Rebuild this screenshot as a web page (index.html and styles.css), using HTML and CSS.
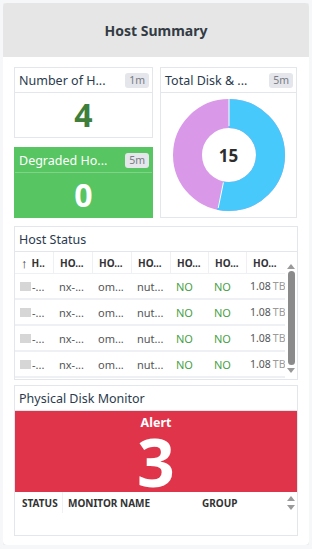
FILE: index.html
```html
<!DOCTYPE html>
<html>
<head>
    <title>Host Summary</title>
    <link rel="stylesheet" href="styles.css">
</head>
<body>

<div class="card">
    <div class="card-head">Host Summary</div>

    <div class="card-body">

        <div class="top-grid">
            <div class="left-col">
                <div class="widget">
                    <div class="w-head"><span class="w-title">Number of H...</span><span class="badge">1m</span></div>
                    <div class="count count-green">4</div>
                </div>
                <div class="widget widget-ok">
                    <div class="w-head"><span class="w-title">Degraded Ho...</span><span class="badge">5m</span></div>
                    <div class="count count-white">0</div>
                </div>
            </div>

            <div class="widget">
                <div class="w-head"><span class="w-title">Total Disk &amp; ...</span><span class="badge">5m</span></div>
                <div class="donut-box">
                    <svg width="114" height="114" viewBox="0 0 114 114" class="donut">
                        <!-- 8 of 15 blue, rest magenta -->
                        <circle cx="57" cy="57" r="41.5" fill="none" stroke="#da98e9" stroke-width="29"/>
                        <circle cx="57" cy="57" r="41.5" fill="none" stroke="#47c9fc" stroke-width="29"
                            stroke-dasharray="139.07 260.75" transform="rotate(-90 57 57)"/>
                        <line x1="57" y1="0" x2="57" y2="28" stroke="#fff" stroke-width="1"/>
                        <line x1="57" y1="57" x2="46.2" y2="110" stroke="#fff" stroke-width="1" stroke-dasharray="0 28 60"/>
                    </svg>
                    <span class="donut-num">15</span>
                </div>
            </div>
        </div>

        <div class="widget host-status">
            <div class="w-head"><span class="w-title">Host Status</span></div>
            <div class="table-wrap">
                <div class="tbl">
                    <div class="th"><span class="sort">&#8593;</span>H..</div><div class="th">HO...</div><div class="th">HO...</div><div class="th">HO...</div><div class="th">HO...</div><div class="th">HO...</div><div class="th">HO...</div>

                    <div class="td"><span class="blur"></span>-...</div><div class="td">nx-...</div><div class="td">om...</div><div class="td">nut...</div><div class="td no">NO</div><div class="td no">NO</div><div class="td size">1.08 <span class="unit">TB</span></div>
                    <div class="td"><span class="blur"></span>-...</div><div class="td">nx-...</div><div class="td">om...</div><div class="td">nut...</div><div class="td no">NO</div><div class="td no">NO</div><div class="td size">1.08 <span class="unit">TB</span></div>
                    <div class="td"><span class="blur"></span>-...</div><div class="td">nx-...</div><div class="td">om...</div><div class="td">nut...</div><div class="td no">NO</div><div class="td no">NO</div><div class="td size">1.08 <span class="unit">TB</span></div>
                    <div class="td"><span class="blur"></span>-...</div><div class="td">nx-...</div><div class="td">om...</div><div class="td">nut...</div><div class="td no">NO</div><div class="td no">NO</div><div class="td size">1.08 <span class="unit">TB</span></div>
                </div>
                <div class="scrollbar">
                    <span class="arrow-up"></span>
                    <span class="thumb"></span>
                    <span class="arrow-down"></span>
                </div>
            </div>
        </div>

        <div class="widget disk-monitor">
            <div class="w-head"><span class="w-title">Physical Disk Monitor</span></div>
            <div class="alert">
                <div class="alert-label">Alert</div>
                <div class="alert-num">3</div>
            </div>
            <div class="mon-head">
                <div class="mh mh-status">STATUS</div>
                <div class="mh mh-name">MONITOR NAME</div>
                <div class="mh mh-group">GROUP</div>
                <div class="mini-scroll"><span class="arrow-up"></span><span class="arrow-down"></span></div>
            </div>
        </div>

    </div>
</div>

</body>
</html>
```

FILE: styles.css
```css
body{
    margin: 3px;
    background-color: #f6f7f9;
    font-family: "Noto Sans", "Open Sans", sans-serif;
    color: #2c3744;
}

.card{
    width: 306px;
    height: 542px;
    background-color: white;
    border-radius: 4px;
    box-shadow: 0 0 2px rgba(0, 0, 0, 0.15);
    overflow: hidden;
    display: flex;
    flex-direction: column;
}

.card-head{
    height: 54px;
    background-color: #e6e6e6;
    display: flex;
    align-items: center;
    justify-content: center;
    font-size: 14px;
    font-weight: bold;
    color: #333b44;
}

.card-body{
    padding: 10px 11px 0 11px;
    display: flex;
    flex-direction: column;
}

.top-grid{
    display: grid;
    grid-template-columns: 139px 137px;
    column-gap: 7px;
    height: 151px;
}

.left-col{
    display: flex;
    flex-direction: column;
    gap: 9px;
}

.widget{
    border: 1px solid #e3e6eb;
    background-color: white;
    display: flex;
    flex-direction: column;
    box-sizing: border-box;
}

.left-col .widget{
    height: 71px;
}

.widget-ok{
    background-color: #57c562;
    border-color: #57c562;
}

.w-head{
    height: 24px;
    border-bottom: 1px solid #e3e6eb;
    display: flex;
    align-items: center;
    justify-content: space-between;
    padding: 0 3px 0 4px;
    flex-shrink: 0;
}

.widget-ok .w-head{
    border-bottom-color: #7ed487;
}

.w-title{
    font-size: 12.5px;
    color: #2b3b4e;
    white-space: nowrap;
}

.widget-ok .w-title{
    color: white;
}

.badge{
    background-color: #e4e6eb;
    color: #777c85;
    font-size: 10.5px;
    padding: 1px 4px;
    border-radius: 3px;
    line-height: 13px;
}

.count{
    flex: 1;
    display: flex;
    align-items: center;
    justify-content: center;
    font-size: 32px;
    font-weight: bold;
    line-height: 1;
}

.count-green{
    color: #3f7f3b;
}

.count-white{
    color: white;
}

.donut-box{
    flex: 1;
    position: relative;
    display: flex;
    align-items: center;
    justify-content: center;
}

.donut-num{
    position: absolute;
    left: 0;
    right: 0;
    top: 50%;
    transform: translateY(-50%);
    text-align: center;
    font-size: 17px;
    font-weight: bold;
    color: #2d2d2d;
}

.host-status{
    margin-top: 8px;
    height: 154px;
}

.table-wrap{
    display: flex;
    flex: 1;
}

.tbl{
    flex: 1;
    display: grid;
    grid-template-columns: 39px 39px 39px 39px 38px 38px 39px;
    grid-template-rows: 22px 26px 26px 26px 26px;
    overflow: hidden;
}

.th{
    font-size: 10px;
    font-weight: bold;
    color: #333;
    display: flex;
    align-items: center;
    padding-left: 6px;
    border-right: 1px solid #eef0f3;
    border-bottom: 1px solid #eef0f3;
    white-space: nowrap;
}

.sort{
    font-size: 13px;
    font-weight: normal;
    margin-right: 4px;
}

.td{
    font-size: 11px;
    color: #555;
    display: flex;
    align-items: center;
    padding-left: 5px;
    border-bottom: 2px solid #eef0f3;
    white-space: nowrap;
}

.size{
    padding-left: 3px;
    font-size: 10.5px;
}

.no{
    color: #47a147;
}

.unit{
    color: #9a9a9a;
    margin-left: 2px;
}

.blur{
    display: inline-block;
    width: 11px;
    height: 9px;
    background-color: #d6d6d6;
    margin-right: 1px;
}

.scrollbar{
    width: 12px;
    display: flex;
    flex-direction: column;
    align-items: center;
    padding-top: 12px;
}

.arrow-up{
    width: 0;
    height: 0;
    border-left: 4px solid transparent;
    border-right: 4px solid transparent;
    border-bottom: 5px solid #9a9a9a;
}

.arrow-down{
    width: 0;
    height: 0;
    border-left: 4px solid transparent;
    border-right: 4px solid transparent;
    border-top: 5px solid #9a9a9a;
}

.thumb{
    width: 7px;
    height: 94px;
    background-color: #8b8b8b;
    border-radius: 4px;
    margin: 2px 0 3px 0;
}

.disk-monitor{
    margin-top: 5px;
    height: 151px;
}

.alert{
    background-color: #e0344b;
    height: 81px;
    color: white;
    text-align: center;
    flex-shrink: 0;
}

.alert-label{
    font-size: 12.5px;
    font-weight: bold;
    line-height: 16px;
    padding-top: 4px;
}

.alert-num{
    font-size: 66px;
    font-weight: bold;
    line-height: 60px;
}

.mon-head{
    display: flex;
    height: 21px;
    align-items: center;
    position: relative;
}

.mh{
    font-size: 10px;
    font-weight: bold;
    color: #333;
    white-space: nowrap;
    height: 21px;
    display: flex;
    align-items: center;
}

.mh-status{
    width: 40px;
    padding-left: 7px;
    border-right: 1px solid #eef0f3;
}

.mh-name{
    width: 134px;
    padding-left: 5px;
}

.mh-group{
    flex: 1;
}

.mini-scroll{
    width: 12px;
    display: flex;
    flex-direction: column;
    align-items: center;
    gap: 4px;
    padding-top: 4px;
    align-self: flex-start;
}
```
